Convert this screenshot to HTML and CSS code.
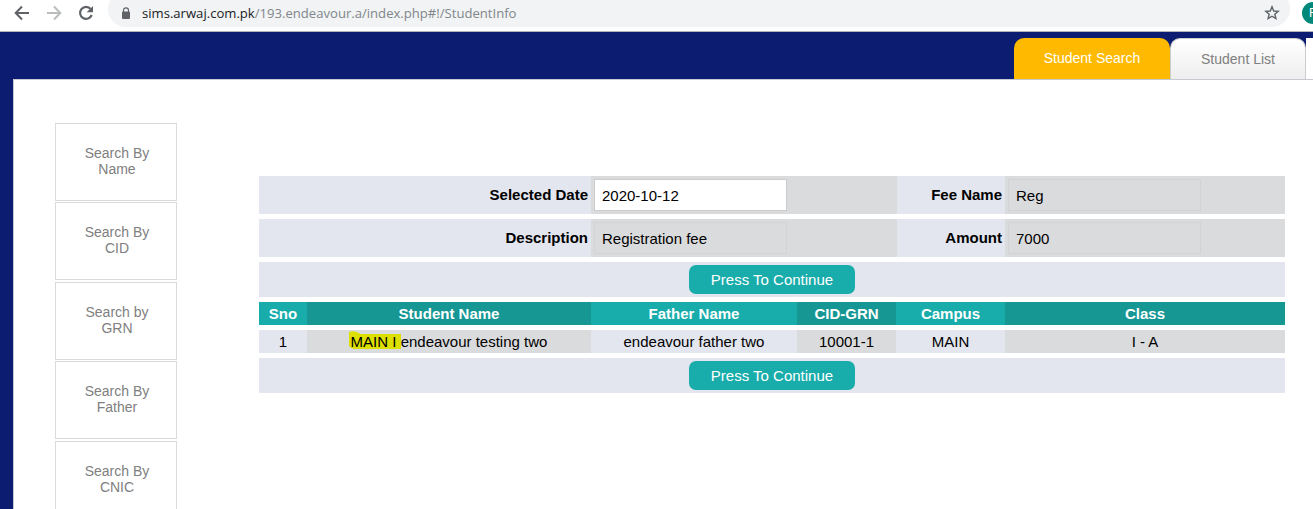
FILE: index.html
```html
<!DOCTYPE html>
<html lang="en">
<head>
<meta charset="utf-8">
<title>Student Info</title>
<link rel="stylesheet" href="styles.css">
</head>
<body>
<div class="toolbar">
  <svg class="nav" width="96" height="31" viewBox="0 0 96 31" fill="none" stroke-width="2">
    <path d="M29 13H16.500M22 6.500L15.700 13L22 19.500" stroke="#5f6368"/>
    <path d="M47 13H60M54 6.500L60.300 13L54 19.500" stroke="#babcbe"/>
    <path d="M90.700 9A6 6 0 1 0 91.700 15" stroke="#5f6368" stroke-width="2.200"/>
    <path d="M93 6v6.300h-6.300z" fill="#5f6368"/>
  </svg>
  <div class="address">
    <svg class="lock" width="10" height="13" viewBox="0 0 10 13">
      <path d="M2.500 5V3.300a2.500 2.500 0 0 1 5 0V5" fill="none" stroke="#5f6368" stroke-width="1.200"/>
      <rect x="1" y="4.500" width="8" height="7.500" rx="1" fill="#5f6368"/>
    </svg>
    <span class="url"><span class="host">sims.arwaj.com.pk</span>/193.endeavour.a/index.php#!/StudentInfo</span>
    <svg class="star" width="16" height="16" viewBox="0 0 16 16" fill="none" stroke="#5f6368" stroke-width="1.400">
      <path d="M8 1.800L9.700 6L14.200 6.300L10.800 9.200L11.900 13.600L8 11.200L4.100 13.600L5.200 9.200L1.800 6.300L6.300 6Z"/>
    </svg>
  </div>
  <div class="avatar">F</div>
</div>
<div class="app">
  <div class="tabs">
    <div class="tab active">Student Search</div>
    <div class="tab">Student List</div>
    <div class="tab next"></div>
  </div>
  <div class="page">
    <nav class="side">
      <a class="item">Search By<br>Name</a>
      <a class="item">Search By<br>CID</a>
      <a class="item">Search by<br>GRN</a>
      <a class="item">Search By<br>Father</a>
      <a class="item">Search By<br>CNIC</a>
    </nav>
    <main class="main">
      <div class="form-row">
        <label class="label">Selected Date</label>
        <div class="cell"><div class="field editable">2020-10-12</div></div>
        <label class="label">Fee Name</label>
        <div class="cell"><div class="field">Reg</div></div>
      </div>
      <div class="form-row">
        <label class="label">Description</label>
        <div class="cell"><div class="field">Registration fee</div></div>
        <label class="label">Amount</label>
        <div class="cell"><div class="field">7000</div></div>
      </div>
      <div class="action"><button class="button">Press To Continue</button></div>
      <div class="list-row head">
        <div>Sno</div><div>Student Name</div><div>Father Name</div><div>CID-GRN</div><div>Campus</div><div>Class</div>
      </div>
      <div class="list-row">
        <div>1</div>
        <div><span class="mark"><svg class="marker" width="52" height="19" viewBox="0 0 52 19"><path d="M0 1Q5 -1 10 2L11 3H52V18H5Q1 17 0 15Z" fill="#dddf00"/></svg>MAIN I </span>endeavour testing two</div>
        <div>endeavour father two</div><div>10001-1</div><div>MAIN</div><div>I - A</div>
      </div>
      <div class="action"><button class="button">Press To Continue</button></div>
    </main>
  </div>
</div>
</body>
</html>
```
FILE: styles.css
```css
* { box-sizing: border-box; }
body {
  margin: 0;
  height: 509px;
  overflow: hidden;
  display: flex;
  flex-direction: column;
  font-family: "Liberation Sans", Arial, sans-serif;
  background: #fff;
}
.toolbar {
  flex: none;
  height: 32px;
  display: flex;
  border-bottom: 1px solid #b4b5b8;
  overflow: hidden;
}
.nav { flex: none; }
.address {
  flex: none;
  display: flex;
  align-items: center;
  width: 1182px;
  height: 36px;
  margin: -9px 0 0 12px;
  padding: 8px 10px 0 13px;
  border-radius: 18px;
  background: #f1f3f4;
}
.lock { margin-right: 11px; }
.url {
  font: 13.100px/20px "Open Sans", sans-serif;
  color: #80868b;
  white-space: nowrap;
}
.host { color: #202124; }
.star { margin-left: auto; }
.avatar {
  flex: none;
  width: 22px;
  height: 22px;
  margin: 2px 0 0 12px;
  padding-left: 7px;
  border-radius: 50%;
  background: #00897b;
  color: #fff;
  font: 12px/22px Roboto, sans-serif;
}
.app {
  flex: 1;
  display: flex;
  flex-direction: column;
  padding: 6px 0 0 13px;
  background: #0c1c70;
}
.tabs {
  flex: none;
  display: flex;
  justify-content: flex-end;
  height: 41px;
}
.tab {
  width: 136px;
  padding-top: 1px;
  border: 1px solid #ccc;
  border-width: 1px 1px 0;
  border-radius: 10px 10px 0 0;
  background: linear-gradient(#fff, #eee);
  color: #808080;
  font-size: 14px;
  line-height: 39px;
  text-align: center;
}
.tab.active {
  width: 156px;
  padding: 0;
  border: 0;
  background: #ffba00;
  color: #fff;
  line-height: 40px;
}
.tab.next { width: 7px; border-width: 0; border-radius: 0; background: #fff; }
.page {
  flex: 1;
  display: flex;
  align-items: flex-start;
  border: 1px solid #c8cad2;
  border-width: 1px 0 0 1px;
  background: #fff;
}
.side {
  width: 122px;
  margin: 43px 82px 0 41px;
  display: flex;
  flex-direction: column;
  gap: 1.450px;
}
.item {
  height: 78px;
  padding: 21px 0 0 2px;
  border: 1px solid #d9dadb;
  color: #808080;
  font-size: 14px;
  line-height: 16px;
  text-align: center;
}
.item:last-child { margin-top: 0.200px; }
.main {
  width: 1026px;
  margin-top: 96px;
  display: flex;
  flex-direction: column;
  gap: 5px;
  font-size: 15px;
  color: #000;
}
.form-row {
  display: grid;
  grid-template-columns: 332px 306px 108px 280px;
  height: 38px;
}
.label {
  padding-right: 3px;
  background: #e3e6ef;
  font-weight: bold;
  text-align: right;
  line-height: 38px;
}
.cell { padding: 3px; background: #dadbdc; }
.field {
  width: 193px;
  height: 32px;
  padding-left: 7px;
  border: 1px solid #d2d3d5;
  line-height: 32px;
}
.editable { background: #fff; border-color: #ccc; }
.action {
  height: 35px;
  display: flex;
  justify-content: center;
  align-items: center;
  background: #e3e6ef;
}
.button {
  width: 166px;
  height: 29px;
  padding: 0;
  border: 0;
  border-radius: 7px;
  background: #18acab;
  color: #fff;
  font: 15px/29px "Liberation Sans", Arial, sans-serif;
}
.list-row {
  display: grid;
  grid-template-columns: 48px 284px 206px 99px 109px 280px;
  height: 23px;
  line-height: 23px;
  text-align: center;
}
.list-row div { background: #e3e6ef; }
.list-row div:nth-child(even) { background: #dadbdc; }
.list-row.head { color: #fff; font-weight: bold; }
.list-row.head div { background: #18acab; }
.list-row.head div:nth-child(even) { background: #169794; }
.mark { position: relative; display: inline-block; white-space: pre; isolation: isolate; }
.marker { position: absolute; left: -2px; top: 1px; z-index: -1; }
```
